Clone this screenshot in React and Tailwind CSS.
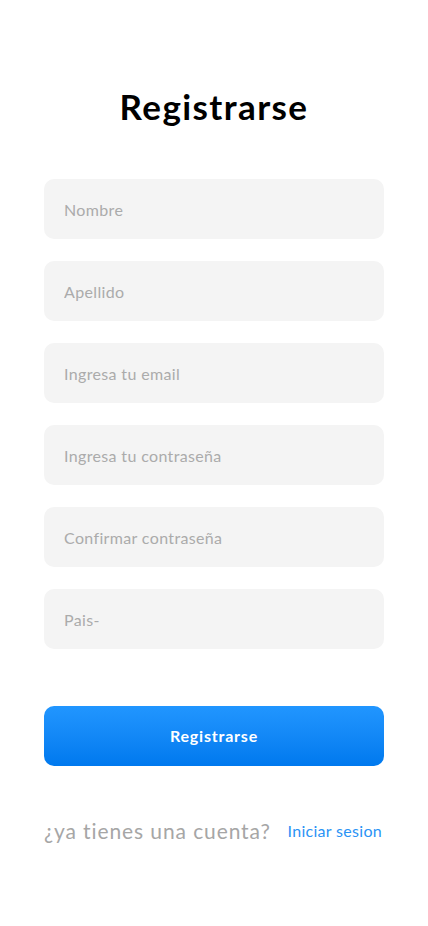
export default function App() {
  const fields = ["Nombre", "Apellido", "Ingresa tu email", "Ingresa tu contraseña", "Confirmar contraseña", "Pais-"];
  return (
    <div className="w-[428px] h-[926px] bg-white flex flex-col items-center" style={{ fontFamily: "Lato, 'Noto Sans', sans-serif" }}>
      <h1 className="mt-[84px] text-[35px] leading-[44px] font-bold tracking-[1.4px] text-black">Registrarse</h1>
      <div className="mt-[51px] w-[340px] flex flex-col gap-[22px]">
        {fields.map((f) => (
          <input
            key={f}
            placeholder={f}
            className="h-[60px] w-full rounded-[10px] bg-[#f4f4f4] px-5 text-[16px] tracking-[0.35px] text-black placeholder:text-[#ababab] outline-none"
          />
        ))}
      </div>
      <button className="mt-[57px] w-[340px] h-[60px] rounded-[10px] bg-gradient-to-b from-[#2196ff] to-[#0079ee] text-white text-[16px] font-bold tracking-[0.8px]">
        Registrarse
      </button>
      <div className="mt-[49px] w-[340px] flex items-center justify-between">
        <span className="text-[21px] text-[#a6a6a6] tracking-[0.9px]">¿ya tienes una cuenta?</span>
        <span className="text-[16px] text-[#2a93f5] tracking-[0.3px] mr-[2px]">Iniciar sesion</span>
      </div>
    </div>
  );
}
